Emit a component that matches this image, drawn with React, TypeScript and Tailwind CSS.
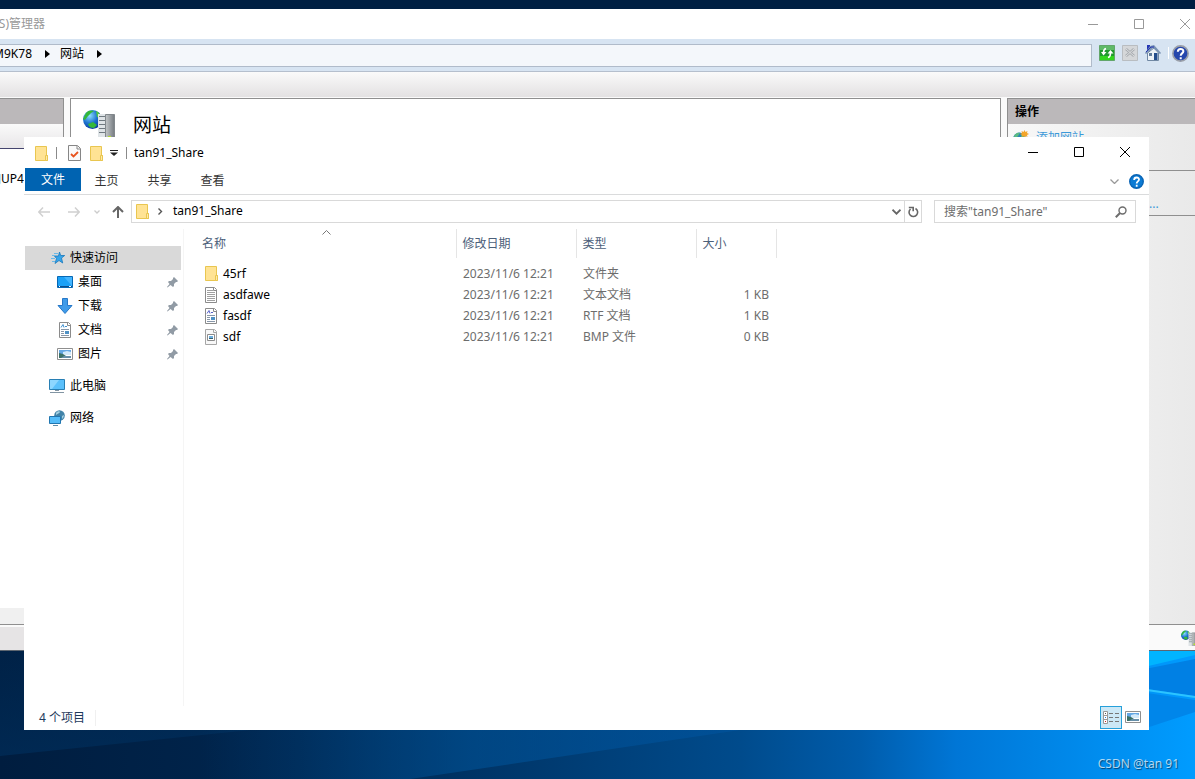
import type { ReactNode } from 'react';

interface FileRow {
  name: string;
  date: string;
  type: string;
  size: string;
  icon: ReactNode;
}

interface PinnedItem {
  label: string;
  icon: ReactNode;
}

function Wallpaper() {
  return (
    <svg className="absolute inset-0 h-full w-full" viewBox="0 0 1195 779" preserveAspectRatio="none" aria-hidden="true">
      <defs>
        <linearGradient id="wall" x1="0" x2="1" y1="0" y2="0">
          <stop offset="0" stopColor="#001d3f" />
          <stop offset="0.25" stopColor="#00264f" />
          <stop offset="0.36" stopColor="#00305f" />
          <stop offset="0.5" stopColor="#003f78" />
          <stop offset="0.62" stopColor="#004b8c" />
          <stop offset="0.72" stopColor="#005cab" />
          <stop offset="0.8" stopColor="#0076d6" />
          <stop offset="1" stopColor="#009cff" />
        </linearGradient>
        <linearGradient id="glow" x1="0" x2="1" y1="0" y2="0">
          <stop offset="0" stopColor="#0058a0" stopOpacity="0" />
          <stop offset="0.5" stopColor="#0058a0" stopOpacity="0.5" />
          <stop offset="1" stopColor="#0058a8" stopOpacity="0.4" />
        </linearGradient>
        <linearGradient id="haze" x1="0" x2="0" y1="0" y2="1">
          <stop offset="0" stopColor="#003262" stopOpacity="0.3" />
          <stop offset="1" stopColor="#003262" stopOpacity="0.9" />
        </linearGradient>
      </defs>
      <rect width="1195" height="779" fill="url(#wall)" />
      <rect width="1195" height="20" fill="#001f42" />
      <path d="M0 640H250V730L0 756z" fill="url(#haze)" opacity="0.6" />
      <path d="M200 700H740V730L410 779H200z" fill="url(#glow)" />
      <path d="M1140 640H1195V655L1140 668z" fill="#00b4ff" />
      <path d="M1140 670L1195 659V696L1140 688z" fill="#0080e4" />
      <path d="M1140 689L1195 697" stroke="#2cc4ff" strokeWidth="2" />
      <path d="M1140 692L1195 700V712L1140 730z" fill="#0086ea" />
    </svg>
  );
}

function FolderIcon() {
  return (
    <svg width="14" height="17" viewBox="0 0 14 17" className="shrink-0" aria-hidden="true">
      <path d="M1.500 1.500h11v9h1v5h-12z" fill="#ffe394" stroke="#e9c650" />
      <path d="M11.500 15.500v-5h2v5z" fill="#ffe9a9" stroke="#e9c650" />
    </svg>
  );
}

function CheckedDocIcon() {
  return (
    <svg width="13" height="17" viewBox="0 0 13 17" className="shrink-0" aria-hidden="true">
      <path d="M.5.500h9l3 3v12H.5z" fill="#fafafa" stroke="#868686" />
      <path d="M9 1v3h3" fill="none" stroke="#868686" />
      <path d="M3 9l2.500 2.500L10 7" fill="none" stroke="#e8541e" strokeWidth="1.800" />
    </svg>
  );
}

function TextFileIcon() {
  return (
    <svg width="14" height="16" viewBox="0 0 14 16" className="shrink-0" aria-hidden="true">
      <path d="M1.500.500h9l2 2v13h-11z" fill="#fff" stroke="#8b8b8b" />
      <path d="M9.500 1v2.500H12" fill="none" stroke="#8b8b8b" />
      <path d="M3 3.500h6M3 5.500h8M3 7.500h8M3 9.500h8M3 11.500h8M3 13.500h8" stroke="#a0a0a0" />
    </svg>
  );
}

function RtfFileIcon({ accent = '#5560c8' }: { accent?: string }) {
  return (
    <svg width="14" height="16" viewBox="0 0 14 16" className="shrink-0" aria-hidden="true">
      <path d="M1.500.500h9l2 2v13h-11z" fill="#fff" stroke="#8b8b8b" />
      <path d="M9.500 1v2.500H12" fill="none" stroke="#8b8b8b" />
      <path d="M3 5.500l2-3 1 3M7 4.500h2" fill="none" stroke={accent} />
      <path d="M3 7.500h8M3 9.500h3M3 11.500h3M3 13.500h8" stroke="#8796a8" />
      <path d="M7 9h4v3H7z" fill="#4f91c4" />
    </svg>
  );
}

function BmpFileIcon() {
  return (
    <svg width="14" height="16" viewBox="0 0 14 16" className="shrink-0" aria-hidden="true">
      <path d="M1.500.500h9l2 2v13h-11z" fill="#f8f8f8" stroke="#a6a6a6" />
      <path d="M9.500 1v2.500H12" fill="none" stroke="#a6a6a6" />
      <path d="M3.500 5.500h7v6h-7z" fill="#fff" stroke="#8b8b8b" />
      <path d="M5 7h4v2H5z" fill="#6badde" />
      <path d="M5 9h4v1H5z" fill="#335f6c" />
    </svg>
  );
}

function PictureIcon() {
  return (
    <svg width="16" height="12" viewBox="0 0 16 12" className="shrink-0" aria-hidden="true">
      <path d="M.5.500h15v11H.5z" fill="#fff" stroke="#8f8f8f" />
      <path d="M2 2h12v4H2z" fill="#64a7e4" />
      <path d="M6 4l4-1 4 1v3H6z" fill="#d2e9fa" />
      <path d="M2 5l4 1 3 2h5v2H2z" fill="#3c7167" />
      <path d="M7 8h7v2H4z" fill="#668fa9" />
    </svg>
  );
}

function DesktopIcon() {
  return (
    <svg width="16" height="12" viewBox="0 0 16 12" className="shrink-0" aria-hidden="true">
      <path d="M.5.500h15v11H.5z" fill="#1ba1f7" stroke="#0768b4" />
      <path d="M15 1v9L7 1z" fill="#43b5ff" />
      <path d="M1 10.500h14" stroke="#0b4d8c" />
      <path d="M2 10.500h1M12 10.500h2" stroke="#fff" />
    </svg>
  );
}

function DownloadIcon() {
  return (
    <svg width="16" height="16" viewBox="0 0 16 16" className="shrink-0" aria-hidden="true">
      <path d="M5.500.500h5v7h4.500L8 15.500 1 7.500h4.500z" fill="#3f9be9" stroke="#2778c8" />
    </svg>
  );
}

function StarIcon() {
  return (
    <svg width="15" height="14" viewBox="0 0 15 14" className="shrink-0" aria-hidden="true">
      <path d="M8.500 1l1.200 3.500h4L10.500 7l1.200 5L8 9.500 4 12.500l1.500-5L3.500 5h4z" fill="#36a4ea" stroke="#1878bd" strokeWidth="0.8" />
      <path d="M3 2.500h4M1 4.500h3M0 7.500h4M1 10.500h3" stroke="#6bb9e8" />
    </svg>
  );
}

function ComputerIcon() {
  return (
    <svg width="16" height="16" viewBox="0 0 16 16" className="shrink-0" aria-hidden="true">
      <path d="M.5 1.500h15v10H.5z" fill="#5bc0fb" stroke="#287fb4" />
      <path d="M1 2h9L3 11H1z" fill="#8dd6ff" />
      <path d="M6 12h4v1H6z" fill="#8295a3" />
      <path d="M1 14.500h14" stroke="#8295a3" />
    </svg>
  );
}

function NetworkIcon() {
  return (
    <svg width="16" height="16" viewBox="0 0 16 16" className="shrink-0" aria-hidden="true">
      <circle cx="10.500" cy="5.500" r="5.300" fill="#4283a8" />
      <path d="M7 3c1-2 4-2 4-1s-3 2-4 3zM13 6l2-1c0 2-1 3-2 4z" fill="#a3cfe1" />
      <path d="M.5 6.500h11v7H.5z" fill="#55bdfa" stroke="#2176b0" />
      <path d="M4 15.500h5" stroke="#5f8ca9" />
    </svg>
  );
}

function PinIcon() {
  return (
    <svg width="11" height="11" viewBox="0 0 11 11" className="shrink-0" aria-hidden="true">
      <path d="M7 0l4 4-1 1H9L7 7v2L6 10 3.500 8 .5 10.500 0 10 2.500 7 1 5l1-1h2L6 2V1z" fill="#919ba5" />
    </svg>
  );
}

function ServerGlobeIcon({ size = 32 }: { size?: number }) {
  return (
    <svg width={size} height={size} viewBox="0 0 32 32" className="shrink-0" aria-hidden="true">
      <defs>
        <radialGradient id="globe" cx="0.35" cy="0.3" r="0.8">
          <stop offset="0" stopColor="#8fe0ff" />
          <stop offset="0.5" stopColor="#1d73cf" />
          <stop offset="1" stopColor="#062f96" />
        </radialGradient>
        <linearGradient id="tower">
          <stop offset="0" stopColor="#c4c8ca" />
          <stop offset="1" stopColor="#757b80" />
        </linearGradient>
      </defs>
      <circle cx="9.500" cy="10.500" r="9.500" fill="url(#globe)" />
      <path d="M3 4c2-3 6-3 8-2L8 4 5 7 2 11 0 10zM5 15l5-2 4 3-3 3c-3 0-5-1-6-4z" fill="#35b83a" />
      <path d="M13 2c3 1 5 4 5 7l-4-1z" fill="#4fca43" />
      <path d="M15 5h8v27h-8z" fill="#dfe4e7" />
      <path d="M22.500 5.500h9v26h-9z" fill="url(#tower)" stroke="#82888c" />
      <path d="M16 7.500h6M16 11.500h6M16 15.500h6M16 19.500h6M16 23.500h6" stroke="#6f7980" strokeWidth="1.200" />
      <path d="M25 27h3v3h-3z" fill="#b3df2c" />
    </svg>
  );
}

function AddSiteIcon() {
  return (
    <svg width="16" height="16" viewBox="0 0 16 16" className="shrink-0" aria-hidden="true">
      <circle cx="6.500" cy="9" r="6.500" fill="#2a86b8" />
      <path d="M1 6c2-3 4-4 6-3L5 6 2 9zM8 5l4 1v4H9z" fill="#5dbb80" />
      <path d="M11.500 0l1 2 2-1-.5 2 2 1-2 1 .5 2-2-1-1 2-1-2-2 1 .5-2-2-1 2-1L8.500 1l2 1z" fill="#f3a52a" />
    </svg>
  );
}

function HelpIcon({ size, fill, ring }: { size: number; fill: string; ring: string }) {
  return (
    <svg width={size} height={size} viewBox="0 0 16 16" className="shrink-0" aria-hidden="true">
      <circle cx="8" cy="8" r="7.200" fill={fill} stroke={ring} strokeWidth="1.500" />
      <path d="M5.500 6.300c0-3.400 5.200-3.300 5.200-.4C10.700 7.800 8.200 8 8.200 10M8.200 11.500v2" fill="none" stroke="#fff" strokeWidth="1.900" />
    </svg>
  );
}

function RestartIcon() {
  return (
    <svg width="16" height="16" viewBox="0 0 16 16" aria-hidden="true">
      <path d="M.5.500h15v15H.5z" fill="#1f9a2c" stroke="#62a66a" />
      <path d="M1 1h14v4H1z" fill="#5fba67" />
      <path d="M1 11h14v4H1z" fill="#32d51e" />
      <path d="M7 3.500C5 4 4.500 5 4.500 8M9 12.500c2-.5 2.500-1.500 2.500-4.500" fill="none" stroke="#fff" strokeWidth="1.600" />
      <path d="M2 7h5.500L4.500 10.500zM8.500 8.500L11.500 5l3 3.500z" fill="#fff" />
    </svg>
  );
}

function StopIcon() {
  return (
    <svg width="16" height="16" viewBox="0 0 16 16" aria-hidden="true">
      <path d="M.5.500h15v15H.5z" fill="#d5d7d9" stroke="#b9bdc1" />
      <path d="M4 4l8 7M12 4l-8 7" stroke="#a9adb1" strokeWidth="2.600" />
      <path d="M4 4l8 7M12 4l-8 7" stroke="#dcdee0" />
    </svg>
  );
}

function HomeIcon() {
  return (
    <svg width="16" height="16" viewBox="0 0 16 16" aria-hidden="true">
      <path d="M2.500 8L9 3l4.500 5v7.500h-11z" fill="#edf2f7" stroke="#7088a3" />
      <path d="M2 0h3v5H2z" fill="#2636b6" />
      <path d="M0 8l5-7 4-1 7 8-1 1-7-6-7 6z" fill="#7992b3" />
      <path d="M1 7l5-5h3" fill="none" stroke="#2636b6" />
      <path d="M4 8h3v3H4z" fill="#5f7b9c" />
      <path d="M9 8h3.500v7H9z" fill="#234d8c" />
    </svg>
  );
}

function CaptionButtons({ stroke }: { stroke: string }) {
  const shapes = [
    { label: '最小化', d: 'M0 5.500h10' },
    { label: '最大化', d: 'M.5.500h9v9h-9z' },
    { label: '关闭', d: 'M0 0l10 10M10 0L0 10' },
  ];
  return (
    <div className="flex">
      {shapes.map((s) => (
        <button key={s.label} type="button" aria-label={s.label} className="flex h-[30px] w-[46px] items-center justify-center">
          <svg width="10" height="10" viewBox="0 0 10 10" fill="none" stroke={stroke} aria-hidden="true">
            <path d={s.d} />
          </svg>
        </button>
      ))}
    </div>
  );
}

function Breadcrumb() {
  return (
    <svg width="5" height="8" viewBox="0 0 5 8" className="shrink-0" aria-hidden="true">
      <path d="M0 0l5 4-5 4z" fill="#000" />
    </svg>
  );
}

function ManagerWindow() {
  return (
    <section className="absolute inset-x-0 top-[9px] bottom-32 flex flex-col overflow-hidden bg-[#fafafa]">
      <header className="-mr-[13px] flex h-[30px] shrink-0 items-center justify-between bg-white">
        <h2 className="flex w-[45px] justify-end whitespace-nowrap text-[#999]">S)管理器</h2>
        <CaptionButtons stroke="#999" />
      </header>

      <div className="flex h-[33px] shrink-0 items-center border-b border-[#b5bfcd] bg-[#d7e4f2] pr-[6px] pb-1">
        <nav className="mt-1 flex h-[23px] flex-1 items-center border border-l-0 border-[#b0bbca] bg-[#f4f7fb] pb-[2px]">
          <a href="#server" className="flex w-8 justify-end whitespace-nowrap">M9K78</a>
          <span className="ml-[13px]"><Breadcrumb /></span>
          <a href="#sites" className="ml-[10px]">网站</a>
          <span className="ml-[13px]"><Breadcrumb /></span>
        </nav>
        <div className="ml-[7px] flex items-center gap-[7px]">
          <button type="button" aria-label="重新启动"><RestartIcon /></button>
          <button type="button" aria-label="停止"><StopIcon /></button>
          <button type="button" aria-label="主页"><HomeIcon /></button>
          <span className="h-3 w-px bg-white" />
          <button type="button" aria-label="帮助" className="-ml-1">
            <HelpIcon size={17} fill="#2547ad" ring="#9a9fa8" />
          </button>
        </div>
      </div>

      <div className="h-[25px] shrink-0 bg-linear-to-b from-[#fafafa] to-[#e3e1e2]" />

      <div className="mt-px flex flex-1 gap-[6px]">
        <aside className="flex w-16 flex-col border-t border-r border-b border-[#8f8f8f] bg-white">
          <div className="h-[25px] bg-[#bbb8ba]" />
          <div className="h-[25px] border-b border-[#44446e] bg-linear-to-b from-[#fafafa] to-[#e8e6e8]" />
          <a href="#node" className="mt-[22px] flex w-6 justify-end">JUP4</a>
          <div className="mt-auto h-4 bg-[#f0f0f0]" />
        </aside>

        <main className="flex-1 border border-[#8f8f8f] bg-white">
          <div className="flex items-start pt-[10px] pl-3">
            <ServerGlobeIcon />
            <h1 className="ml-[18px] text-[19px] leading-8">网站</h1>
          </div>
        </main>

        <aside className="w-[188px] border-t border-b border-l border-[#8f8f8f] bg-linear-to-r from-[#f8f8f8] to-[#e9e9e9]">
          <h2 className="h-[25px] bg-[#bbb8ba] pl-[7px] leading-[26px] font-bold">操作</h2>
          <div className="flex h-[47px] items-start gap-[7px] border-b border-[#8f8f8f] pt-[6px] pl-[5px]">
            <AddSiteIcon />
            <a href="#add" className="text-[#3b99d9]">添加网站</a>
          </div>
          <div className="flex h-[45px] items-end border-b border-[#8f8f8f] pb-[3px] pl-[141px]">
            <a href="#defaults" className="text-[#3b99d9]">...</a>
          </div>
        </aside>
      </div>

      <footer className="flex h-[26px] shrink-0 items-center justify-between border-b border-[#5d6670]">
        <div className="mt-[2px] h-[23px] w-16 bg-[#e6e4e5]" />
        <div className="-mr-[2px]"><ServerGlobeIcon size={16} /></div>
      </footer>
    </section>
  );
}

const pinned: PinnedItem[] = [
  { label: '桌面', icon: <DesktopIcon /> },
  { label: '下载', icon: <DownloadIcon /> },
  { label: '文档', icon: <RtfFileIcon accent="#3f8fce" /> },
  { label: '图片', icon: <PictureIcon /> },
];

const files: FileRow[] = [
  { name: '45rf', date: '2023/11/6 12:21', type: '文件夹', size: '', icon: <FolderIcon /> },
  { name: 'asdfawe', date: '2023/11/6 12:21', type: '文本文档', size: '1 KB', icon: <TextFileIcon /> },
  { name: 'fasdf', date: '2023/11/6 12:21', type: 'RTF 文档', size: '1 KB', icon: <RtfFileIcon /> },
  { name: 'sdf', date: '2023/11/6 12:21', type: 'BMP 文件', size: '0 KB', icon: <BmpFileIcon /> },
];

function TitleBar() {
  return (
    <header className="flex h-[31px] shrink-0 items-start justify-between pr-px">
      <div className="flex h-8 items-center pl-[10px]">
        <FolderIcon />
        <span className="ml-2 h-3 w-px bg-[#8a8a8a]" />
        <button type="button" aria-label="属性" className="ml-[11px]"><CheckedDocIcon /></button>
        <button type="button" aria-label="新建文件夹" className="ml-2"><FolderIcon /></button>
        <button type="button" aria-label="自定义快速访问工具栏" className="ml-[7px]">
          <svg width="8" height="6" viewBox="0 0 8 6" aria-hidden="true">
            <path d="M0 .5h8" stroke="#222" />
            <path d="M0 2.500h8L4 6z" fill="#222" />
          </svg>
        </button>
        <span className="ml-2 h-3 w-px bg-[#8a8a8a]" />
        <h1 className="ml-[7px]">tan91_Share</h1>
      </div>
      <CaptionButtons stroke="#000" />
    </header>
  );
}

function RibbonTabs() {
  return (
    <nav className="flex h-[27px] shrink-0 items-start border-b border-[#dadbdc] pr-[5px] pl-px">
      <button type="button" className="h-[23px] w-14 bg-[#0063b1] pt-px text-white">文件</button>
      <div className="-ml-px flex">
        {['主页', '共享', '查看'].map((tab) => (
          <button key={tab} type="button" className="h-[26px] w-[53px] text-[#333]">{tab}</button>
        ))}
      </div>
      <div className="ml-auto flex h-[26px] items-center gap-[10px]">
        <button type="button" aria-label="展开功能区">
          <svg width="9" height="5" viewBox="0 0 9 5" fill="none" stroke="#999" strokeWidth="1.300" aria-hidden="true">
            <path d="M.5.500l4 4 4-4" />
          </svg>
        </button>
        <button type="button" aria-label="帮助"><HelpIcon size={15} fill="#0c7bd4" ring="#0964b5" /></button>
      </div>
    </nav>
  );
}

function AddressRow() {
  return (
    <div className="flex h-[34px] shrink-0 items-start pt-[5px] pr-[13px]">
      <div className="flex h-[23px] w-[107px] items-center pl-[14px]">
        <button type="button" aria-label="后退">
          <svg width="12" height="10" viewBox="0 0 12 10" fill="none" stroke="#d0d0d0" strokeWidth="1.500" aria-hidden="true">
            <path d="M5 .5L.8 5 5 9.500M1 5h11" />
          </svg>
        </button>
        <button type="button" aria-label="前进" className="ml-[18px]">
          <svg width="12" height="10" viewBox="0 0 12 10" fill="none" stroke="#d0d0d0" strokeWidth="1.500" aria-hidden="true">
            <path d="M7 .5L11.200 5 7 9.500M11 5H0" />
          </svg>
        </button>
        <button type="button" aria-label="最近浏览的位置" className="ml-[14px]">
          <svg width="6" height="4" viewBox="0 0 6 4" fill="none" stroke="#ccc" strokeWidth="1.300" aria-hidden="true">
            <path d="M.5.500L3 3 5.500.500" />
          </svg>
        </button>
        <button type="button" aria-label="上移" className="ml-3">
          <svg width="12" height="12" viewBox="0 0 12 12" fill="none" stroke="#666" strokeWidth="2" aria-hidden="true">
            <path d="M1 6l5-5 5 5M6 1v11" />
          </svg>
        </button>
      </div>
      <div className="flex h-[23px] flex-1 items-center border border-[#d9d9d9]">
        <span className="ml-[3px]"><FolderIcon /></span>
        <svg width="5" height="7" viewBox="0 0 5 7" fill="none" stroke="#555" strokeWidth="1.400" className="ml-[9px]" aria-hidden="true">
          <path d="M.5.500l3 3-3 3" />
        </svg>
        <a href="#share" className="ml-[10px] pb-px">tan91_Share</a>
        <button type="button" aria-label="历史记录" className="mr-[3px] ml-auto">
          <svg width="9" height="6" viewBox="0 0 9 6" fill="none" stroke="#666" strokeWidth="1.800" aria-hidden="true">
            <path d="M.5.700l4 4 4-4" />
          </svg>
        </button>
        <button type="button" aria-label="刷新" className="flex h-full w-[17px] items-center justify-center border-l border-[#d9d9d9]">
          <svg width="11" height="12" viewBox="0 0 11 12" fill="none" stroke="#666" strokeWidth="1.600" aria-hidden="true">
            <path d="M7.500 2.500A4.300 4.300 0 1 1 2.500 3M.8 1.500h4.400v3.800" />
          </svg>
        </button>
      </div>
      <label className="ml-3 flex h-[23px] w-[202px] items-center border border-[#d9d9d9] pr-[8px] pl-[9px]">
        <input
          type="search"
          aria-label="搜索"
          placeholder={'搜索"tan91_Share"'}
          className="w-0 flex-1 outline-none placeholder:text-[#6d6d6d]"
        />
        <svg width="12" height="12" viewBox="0 0 12 12" fill="none" stroke="#6d6d6d" aria-hidden="true">
          <circle cx="7.500" cy="4.500" r="3.500" strokeWidth="1.400" />
          <path d="M5 7L.8 11.200" strokeWidth="2" />
        </svg>
      </label>
    </div>
  );
}

function Sidebar() {
  return (
    <nav className="w-40 shrink-0 border-r border-[#f5f5f5] pt-[17px]">
      <a href="#quick" className="mr-[2px] ml-px flex h-6 items-center gap-1 bg-[#d9d9d9] pl-[26px]">
        <StarIcon />
        快速访问
      </a>
      <ul>
        {pinned.map((item) => (
          <li key={item.label}>
            <a href={`#${item.label}`} className="flex h-6 items-center pr-[5px] pl-[33px]">
              <span className="flex w-4 justify-center">{item.icon}</span>
              <span className="ml-[5px] flex-1">{item.label}</span>
              <PinIcon />
            </a>
          </li>
        ))}
      </ul>
      <a href="#computer" className="mt-2 flex h-6 items-center gap-[5px] pl-[25px]">
        <ComputerIcon />
        此电脑
      </a>
      <a href="#network" className="mt-2 flex h-6 items-center gap-[5px] pl-[25px]">
        <NetworkIcon />
        网络
      </a>
    </nav>
  );
}

function FileTable() {
  return (
    <div className="flex-1">
      <table className="w-[592px] table-fixed border-collapse text-left text-[#6d6d6d]">
        <colgroup>
          <col className="w-[272px]" />
          <col className="w-[120px]" />
          <col className="w-[120px]" />
          <col className="w-[80px]" />
        </colgroup>
        <thead className="text-[#4c607a]">
          <tr className="h-[29px]">
            <th className="relative border-r border-[#e5e5e5] pl-[18px] font-normal">
              名称
              <svg width="9" height="5" viewBox="0 0 9 5" fill="none" stroke="#777" className="absolute top-px left-[138px]" aria-hidden="true">
                <path d="M.5 4.500l4-4 4 4" />
              </svg>
            </th>
            <th className="border-r border-[#e5e5e5] pl-[6px] font-normal">修改日期</th>
            <th className="border-r border-[#e5e5e5] pl-[6px] font-normal">类型</th>
            <th className="border-r border-[#e5e5e5] pl-[6px] font-normal">大小</th>
          </tr>
        </thead>
        <tbody>
          <tr className="h-[5px]" aria-hidden="true" />
          {files.map((file) => (
            <tr key={file.name} className="h-[21px]">
              <td className="pl-5 text-black">
                <div className="flex h-[21px] items-center gap-[5px]">
                  {file.icon}
                  {file.name}
                </div>
              </td>
              <td className="pl-[7px]">{file.date}</td>
              <td className="pl-[7px]">{file.type}</td>
              <td className="pr-[7px] text-right">{file.size}</td>
            </tr>
          ))}
        </tbody>
      </table>
    </div>
  );
}

function StatusBar() {
  return (
    <footer className="flex h-6 shrink-0 items-start pr-2 pl-[15px] text-[#1e395b]">
      <span className="flex h-[23px] items-center">4 个项目</span>
      <span className="mt-1 ml-[10px] h-4 w-px bg-[#f0f0f0]" />
      <button type="button" aria-label="详细信息" className="ml-auto flex h-[23px] w-[22px] items-center justify-center border border-[#26a0da] bg-[#cce8f6]">
        <svg width="16" height="13" viewBox="0 0 16 13" fill="none" aria-hidden="true">
          <path d="M.5.500h4v12h-4zM.5 4.500h4M.5 8.500h4" fill="#fff" stroke="#999" />
          <path d="M6 2.500h4M12 2.500h4M6 6.500h4M12 6.500h4M6 10.500h4M12 10.500h4" stroke="#777" />
          <path d="M2 2h1v1H2z" fill="#555" />
          <path d="M2 6h1v1H2z" fill="#1f7fe0" />
          <path d="M2 10h1v1H2z" fill="#d02020" />
        </svg>
      </button>
      <button type="button" aria-label="大缩略图" className="ml-[3px] flex h-[21px] w-4 items-center justify-center">
        <PictureIcon />
      </button>
    </footer>
  );
}

function ExplorerWindow() {
  return (
    <section className="absolute top-[137px] right-[46px] bottom-[49px] left-6 flex flex-col overflow-hidden bg-white">
      <TitleBar />
      <RibbonTabs />
      <AddressRow />
      <div className="flex flex-1">
        <Sidebar />
        <FileTable />
      </div>
      <StatusBar />
    </section>
  );
}

export default function App() {
  return (
    <div className="relative min-h-screen overflow-hidden bg-[#001f42] font-['Noto_Sans','Noto_Sans_CJK_SC',sans-serif] text-xs text-black">
      <Wallpaper />
      <ManagerWindow />
      <ExplorerWindow />
      <p className="absolute right-4 bottom-[7px] text-white/70 text-shadow-[1px_1px_1px_#0008]">CSDN @tan 91</p>
    </div>
  );
}
